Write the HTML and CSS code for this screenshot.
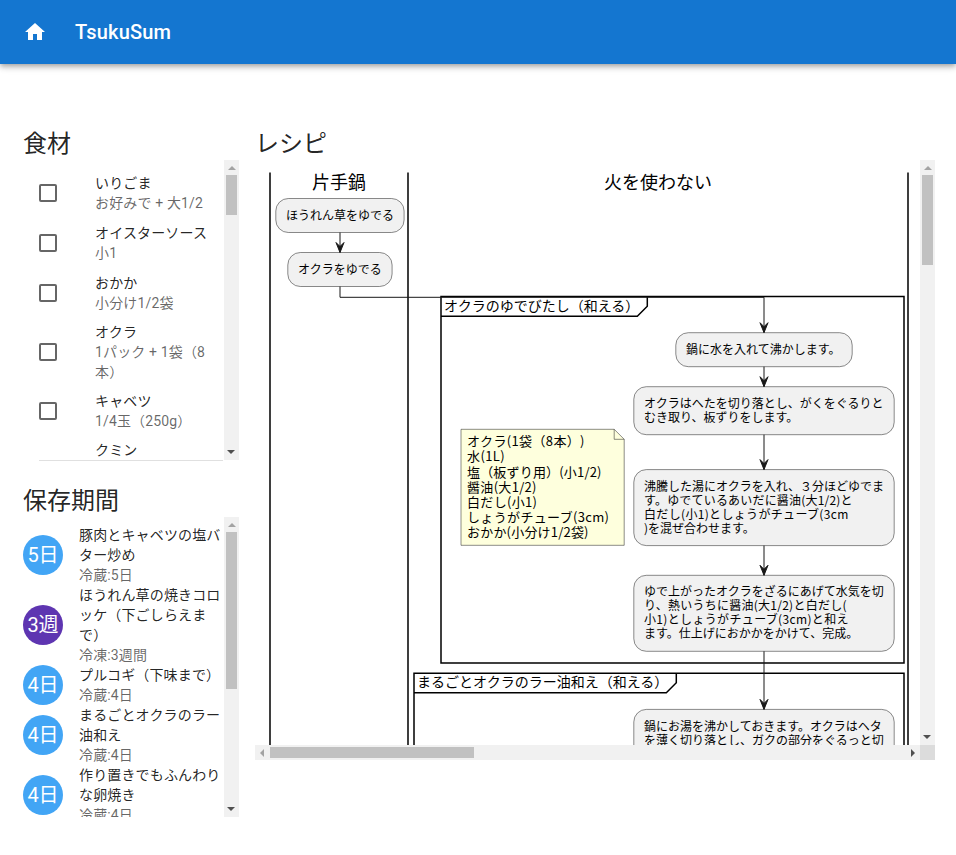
FILE: index.html
```html
<!DOCTYPE html>
<html lang="ja">
<head>
<meta charset="utf-8">
<title>TsukuSum</title>
<link rel="stylesheet" href="styles.css">
</head>
<body>
<header class="app-bar">
  <svg class="home-icon" viewBox="0 0 24 24"><path d="M10 20v-6h4v6h5v-8h3L12 3 2 12h3v8z"/></svg>
  <h1 class="app-title">TsukuSum</h1>
</header>
<main class="layout">
  <div class="sidebar">
    <section>
      <h2 class="heading">食材</h2>
      <div class="scroller">
        <ul class="view ingredients">
          <li class="ingredient"><span class="checkbox"></span><div><p>いりごま</p><p class="secondary">お好みで + 大1/2</p></div></li>
          <li class="ingredient"><span class="checkbox"></span><div><p>オイスターソース</p><p class="secondary">小1</p></div></li>
          <li class="ingredient"><span class="checkbox"></span><div><p>おかか</p><p class="secondary">小分け1/2袋</p></div></li>
          <li class="ingredient"><span class="checkbox"></span><div><p>オクラ</p><p class="secondary">1パック + 1袋（8本）</p></div></li>
          <li class="ingredient"><span class="checkbox"></span><div><p>キャベツ</p><p class="secondary">1/4玉（250g）</p></div></li>
          <li class="ingredient tall"><span class="checkbox"></span><div><p>クミン</p></div></li>
        </ul>
        <div class="bar"><i class="arrow up off"></i><i class="thumb thumb-ingredients"></i><i class="arrow down"></i></div>
      </div>
      <div class="divider"></div>
    </section>
    <section>
      <h2 class="heading">保存期間</h2>
      <div class="scroller">
        <ul class="view storage">
          <li class="dish"><span class="avatar">5日</span><div><p>豚肉とキャベツの塩バター炒め</p><p class="secondary">冷蔵:5日</p></div></li>
          <li class="dish"><span class="avatar frozen">3週</span><div><p>ほうれん草の焼きコロッケ（下ごしらえまで）</p><p class="secondary">冷凍:3週間</p></div></li>
          <li class="dish"><span class="avatar">4日</span><div><p>プルコギ（下味まで）</p><p class="secondary">冷蔵:4日</p></div></li>
          <li class="dish"><span class="avatar">4日</span><div><p>まるごとオクラのラー油和え</p><p class="secondary">冷蔵:4日</p></div></li>
          <li class="dish"><span class="avatar">4日</span><div><p>作り置きでもふんわりな卵焼き</p><p class="secondary">冷蔵:4日</p></div></li>
        </ul>
        <div class="bar"><i class="arrow up off"></i><i class="thumb thumb-storage"></i><i class="arrow down"></i></div>
      </div>
    </section>
  </div>
  <section class="recipe">
    <h2 class="heading">レシピ</h2>
    <div class="recipe-view">
      <svg class="diagram" width="665" height="585" viewBox="255 160 665 585">
        <defs>
          <path id="head" d="M-4-10L0 0L4-10L0-6z"/>
        </defs>
        <g class="step">
          <rect x="275.8" y="198.5" width="128.3" height="34" rx="12.5"/>
          <rect x="287.8" y="252.5" width="104.3" height="34" rx="12.5"/>
          <rect x="675.8" y="332.7" width="176.4" height="34" rx="12.5"/>
          <rect x="633.8" y="386.7" width="260.4" height="48" rx="12.5"/>
          <rect x="633.8" y="469.6" width="260.4" height="76" rx="12.5"/>
          <rect x="633.8" y="575.3" width="260.4" height="76" rx="12.5"/>
          <rect x="633.8" y="709.4" width="260.4" height="90" rx="12.5"/>
        </g>
        <path class="note" d="M461 429.3V545.3H624.2V439.3L614.2 429.3zM614.2 429.3V439.3H624.2"/>
        <g class="frame">
          <path d="M441 296.6H904V663H441zM647.3 296.6V306.2L637.3 316.2H441"/>
          <path d="M414 673.2H904V800H414zM676.3 673.2V682.8L666.3 692.8H414"/>
        </g>
        <path class="lane" d="M270 172.5V745M408 172.5V745M908 172.5V745"/>
        <path class="link" d="M340 232.5V252.5M340 286.5V297.3H764V332.5M764 366.7V386.7M764 434.7V469.6M764 545.6V575.3M764 651.3V709.4"/>
        <g class="heads">
          <use href="#head" x="340" y="252.5"/><use href="#head" x="764" y="332.7"/><use href="#head" x="764" y="386.7"/><use href="#head" x="764" y="469.6"/><use href="#head" x="764" y="575.3"/><use href="#head" x="764" y="709.4"/>
        </g>
        <g class="t18"><text x="312" y="188.5">片手鍋</text><text x="604" y="188.5">火を使わない</text></g>
        <g class="t14"><text x="444" y="311.3">オクラのゆでびたし（和える）</text><text x="417" y="687.3">まるごとオクラのラー油和え（和える）</text></g>
        <g class="t13">
          <text x="467" y="446.2" textLength="117.5">オクラ(1袋（8本）)</text><text x="467" y="461.4" textLength="37.6">水(1L)</text><text x="467" y="476.5" textLength="134.5">塩（板ずり用）(小1/2)</text><text x="467" y="491.6" textLength="69.5">醤油(大1/2)</text><text x="467" y="506.8" textLength="70">白だし(小1)</text><text x="467" y="521.9" textLength="142">しょうがチューブ(3cm)</text><text x="467" y="537" textLength="121.5">おかか(小分け1/2袋)</text>
        </g>
        <g class="t12">
          <text x="286" y="219.6">ほうれん草をゆでる</text>
          <text x="298" y="273.6">オクラをゆでる</text>
          <text x="686" y="353.7">鍋に水を入れて沸かします。</text>
          <text x="644" y="407.8">オクラはへたを切り落とし、がくをぐるりと</text><text x="644" y="421.8">むき取り、板ずりをします。</text>
          <text x="644" y="490.7">沸騰した湯にオクラを入れ、３分ほどゆでま</text><text x="644" y="504.7" textLength="208.5">す。ゆでているあいだに醤油(大1/2)と</text><text x="644" y="518.7" textLength="204.3">白だし(小1)としょうがチューブ(3cm</text><text x="644" y="532.7">)を混ぜ合わせます。</text>
          <text x="644" y="595.9">ゆで上がったオクラをざるにあげて水気を切</text><text x="644" y="609.9" textLength="202.5">り、熱いうちに醤油(大1/2)と白だし(</text><text x="644" y="623.9" textLength="204.5">小1)としょうがチューブ(3cm)と和え</text><text x="644" y="637.9">ます。仕上げにおかかをかけて、完成。</text>
          <text x="644" y="730.5">鍋にお湯を沸かしておきます。オクラはヘタ</text><text x="644" y="744.5">を薄く切り落とし、ガクの部分をぐるっと切</text>
        </g>
      </svg>
      <div class="bar"><i class="arrow up off"></i><i class="thumb thumb-recipe"></i><i class="arrow down"></i></div>
      <div class="bar horizontal"><i class="arrow left off"></i><i class="thumb thumb-wide"></i><i class="arrow right"></i></div>
      <div class="corner"></div>
    </div>
  </section>
</main>
</body>
</html>
```
FILE: styles.css
```css
* { box-sizing: border-box; margin: 0; padding: 0; }
html, body { height: 100%; overflow: hidden; }
body {
  background: #fff;
  color: rgba(0, 0, 0, .87);
  font: 400 14px/20px Roboto, "Noto Sans CJK JP", sans-serif;
  letter-spacing: .15px;
}
ul { list-style: none; }

.app-bar {
  display: flex;
  align-items: center;
  gap: 28px;
  height: 64px;
  padding-left: 23px;
  background: #1476d0;
  color: #fff;
  box-shadow: 0 2px 4px -1px rgba(0,0,0,.2), 0 4px 5px rgba(0,0,0,.14), 0 1px 10px rgba(0,0,0,.12);
}
.home-icon { width: 24px; height: 24px; fill: #fff; }
.app-title { font-size: 20px; line-height: 32px; font-weight: 500; letter-spacing: .15px; }

.layout {
  display: grid;
  grid-template-columns: 216px 680px;
  gap: 16px;
  padding: 63px 0 0 23px;
}
.heading { height: 33px; font-size: 24px; line-height: 34px; font-weight: 400; letter-spacing: 0; }
.sidebar { display: flex; flex-direction: column; gap: 23px; }
.scroller { display: grid; grid-template-columns: 1fr 15px; height: 300px; }
.view { height: 300px; overflow: hidden; }
.secondary { color: rgba(0, 0, 0, .6); }
.divider { height: 1px; margin: 0 16px 0 16px; background: #e0e0e0; }

.ingredients { padding: 8px 16px 0; }
.ingredient { display: flex; align-items: center; gap: 38px; padding: 5px 0; }
.ingredient:nth-child(n+3) { padding-bottom: 4px; }
.ingredient > div { flex: 1; }
.tall { height: 70px; }
.tall > div { align-self: flex-start; }
.checkbox { flex: none; width: 18px; height: 18px; border: 2px solid #666; border-radius: 2px; }

.storage { padding-top: 8px; }
.dish { display: flex; align-items: center; gap: 16px; }
.dish > div { flex: 1; }
.avatar {
  flex: none;
  width: 40px;
  height: 40px;
  border-radius: 50%;
  background: #42a5f5;
  color: #fff;
  font-size: 20px;
  line-height: 40px;
  letter-spacing: 0;
  text-align: center;
}
.frozen { background: #5e35b1; }

.recipe-view { display: grid; grid-template: 585px 15px / 665px 15px; }
.diagram { display: block; overflow: hidden; }
.diagram text { font-family: "Noto Sans CJK JP", sans-serif; fill: #000; letter-spacing: 0; text-spacing-trim: space-all; }
.step rect { fill: #f1f1f1; stroke: #181818; stroke-width: .5; }
.note { fill: #feffdd; stroke: #181818; stroke-width: .5; }
.frame { fill: none; stroke: #000; stroke-width: 1.5; }
.lane { fill: none; stroke: #181818; stroke-width: 1.65; }
.link { fill: none; stroke: #181818; stroke-width: 1; }
.heads { fill: #181818; stroke: #181818; }
.t18 { font-size: 18px; }
.t14 { font-size: 14px; }
.t13 { font-size: 13px; }
.t12 { font-size: 12px; }

.bar { display: flex; flex-direction: column; align-items: center; background: #f1f1f1; }
.arrow { display: flex; flex: none; width: 15px; height: 15px; align-items: center; justify-content: center; color: #505050; }
.arrow::before { content: ""; border: 4px solid transparent; }
.arrow.off { color: #a3a3a3; }
.up::before { border-top: 0; border-bottom-color: currentColor; }
.down { margin-top: auto; padding: 0 1px 2px 0; }
.down::before { border-bottom: 0; border-top-color: currentColor; }
.left { padding-right: 1px; }
.left::before { border-left: 0; border-right-color: currentColor; }
.right { margin-left: auto; }
.right::before { border-right: 0; border-left-color: currentColor; }
.thumb { width: 11px; background: #c1c1c1; }
.thumb-ingredients { height: 40px; }
.thumb-storage { height: 157px; }
.thumb-recipe { height: 90px; }
.horizontal { flex-direction: row; }
.thumb-wide { width: 204px; height: 11px; }
.corner { background: #dcdcdc; }
```
